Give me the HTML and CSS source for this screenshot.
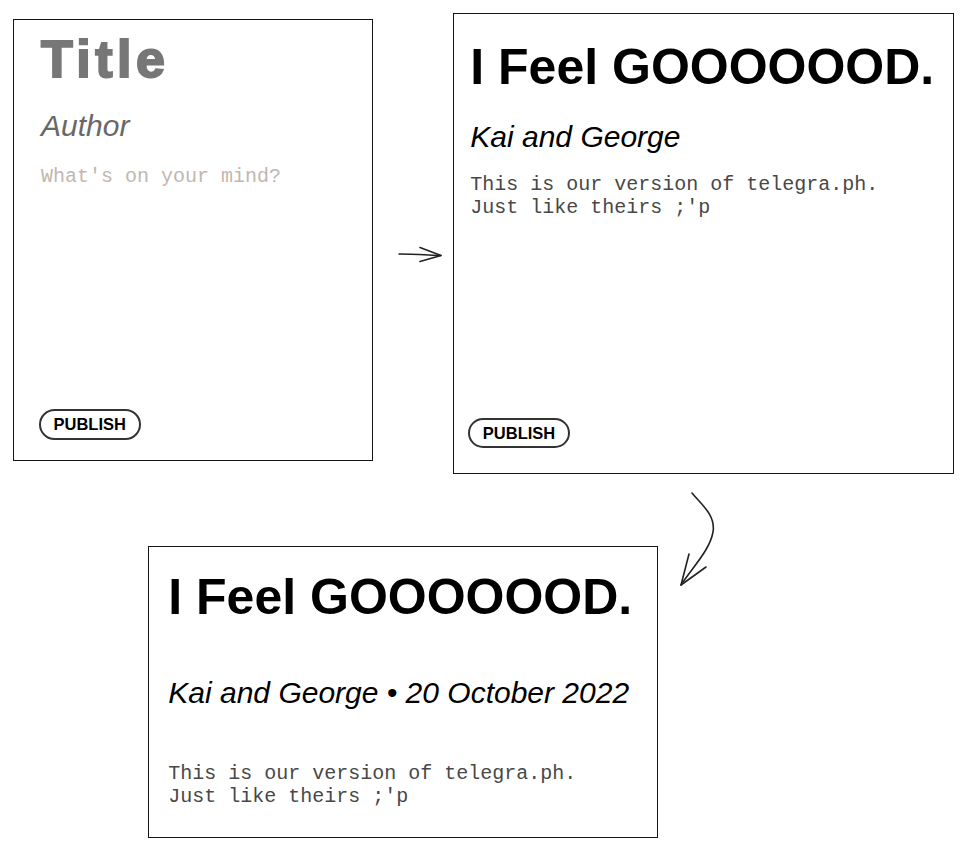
FILE: index.html
```html
<!DOCTYPE html>
<html lang="en">
<head>
<meta charset="utf-8">
<title>Telegraph clone sketch</title>
<link rel="stylesheet" href="styles.css">
</head>
<body>
<main class="canvas">
  <section class="card card-edit">
    <h1 class="title title-placeholder">Title</h1>
    <p class="author author-placeholder">Author</p>
    <p class="body body-placeholder">What's on your mind?</p>
    <button class="publish" type="button">PUBLISH</button>
  </section>

  <section class="card card-filled">
    <h1 class="title">I Feel GOOOOOOD.</h1>
    <p class="author author-filled">Kai and George</p>
    <p class="body body-filled">This is our version of telegra.ph.<br>Just like theirs ;'p</p>
    <button class="publish publish-filled" type="button">PUBLISH</button>
  </section>

  <section class="card card-published">
    <h1 class="title">I Feel GOOOOOOD.</h1>
    <p class="author author-published">Kai and George • 20 October 2022</p>
    <p class="body body-published">This is our version of telegra.ph.<br>Just like theirs ;'p</p>
  </section>

  <svg class="arrows" width="964" height="850" viewBox="0 0 964 850" aria-hidden="true">
    <path d="M399,254 C412,254 428,255 441,255.5" />
    <path d="M420,247.5 L441,255.5 L420,261.5" />
    <path d="M692,493 C700,503 716,515 713,532 C710,550 692,568 681,585" />
    <path d="M689,554 L681,585 L706,567" />
  </svg>
</main>
</body>
</html>
```

FILE: styles.css
```css
html, body {
  margin: 0;
  padding: 0;
  background: #ffffff;
}

.canvas {
  position: relative;
  width: 964px;
  height: 850px;
  overflow: hidden;
  font-family: "Liberation Sans", Arial, sans-serif;
}

.card {
  position: absolute;
  box-sizing: border-box;
  border: 1.6px solid #151515;
  background: #ffffff;
  display: flex;
  flex-direction: column;
  align-items: flex-start;
}

.card-edit {
  left: 13px;
  top: 19px;
  width: 360px;
  height: 442px;
  padding: 12.5px 0 20.5px 27px;
}

.card-filled {
  left: 453px;
  top: 13px;
  width: 501px;
  height: 461px;
  padding: 28px 0 25.5px 16.3px;
}

.card-published {
  left: 148px;
  top: 546px;
  width: 510px;
  height: 292px;
  padding: 25px 0 0 19.3px;
}

.title {
  margin: 0;
  font-size: 50px;
  line-height: 50px;
  font-weight: 700;
  color: #000000;
  white-space: nowrap;
}

.title-placeholder {
  font-size: 52px;
  line-height: 52px;
  letter-spacing: 4.5px;
  color: #777777;
  -webkit-text-stroke: 2px #777777;
}

.author {
  margin: 0;
  font-size: 30px;
  line-height: 30px;
  font-style: italic;
  color: #000000;
  white-space: nowrap;
}

.author-placeholder {
  margin-top: 26.6px;
  color: #686868;
}

.author-filled {
  margin-top: 30px;
}

.author-published {
  margin-top: 56px;
}

.body {
  margin: 0;
  font-family: "Liberation Mono", "Courier New", monospace;
  font-size: 20px;
  line-height: 23px;
  color: #484848;
  white-space: nowrap;
}

.body-placeholder {
  margin-top: 23.6px;
  color: #c2b7ad;
}

.body-filled {
  margin-top: 20.6px;
}

.body-published {
  margin-top: 54px;
}

.publish {
  margin-top: auto;
  margin-left: -2.5px;
  box-sizing: border-box;
  height: 31px;
  padding: 0 13px;
  border: 2px solid #333333;
  border-radius: 16px;
  background: #ffffff;
  font-family: "Liberation Sans", Arial, sans-serif;
  font-size: 16.5px;
  font-weight: 700;
  line-height: 27px;
  color: #000000;
}

.publish-filled {
  height: 30px;
  line-height: 26px;
}

.arrows {
  position: absolute;
  left: 0;
  top: 0;
  pointer-events: none;
  fill: none;
  stroke: #222222;
  stroke-width: 1.6;
  stroke-linecap: round;
  stroke-linejoin: round;
}
```
